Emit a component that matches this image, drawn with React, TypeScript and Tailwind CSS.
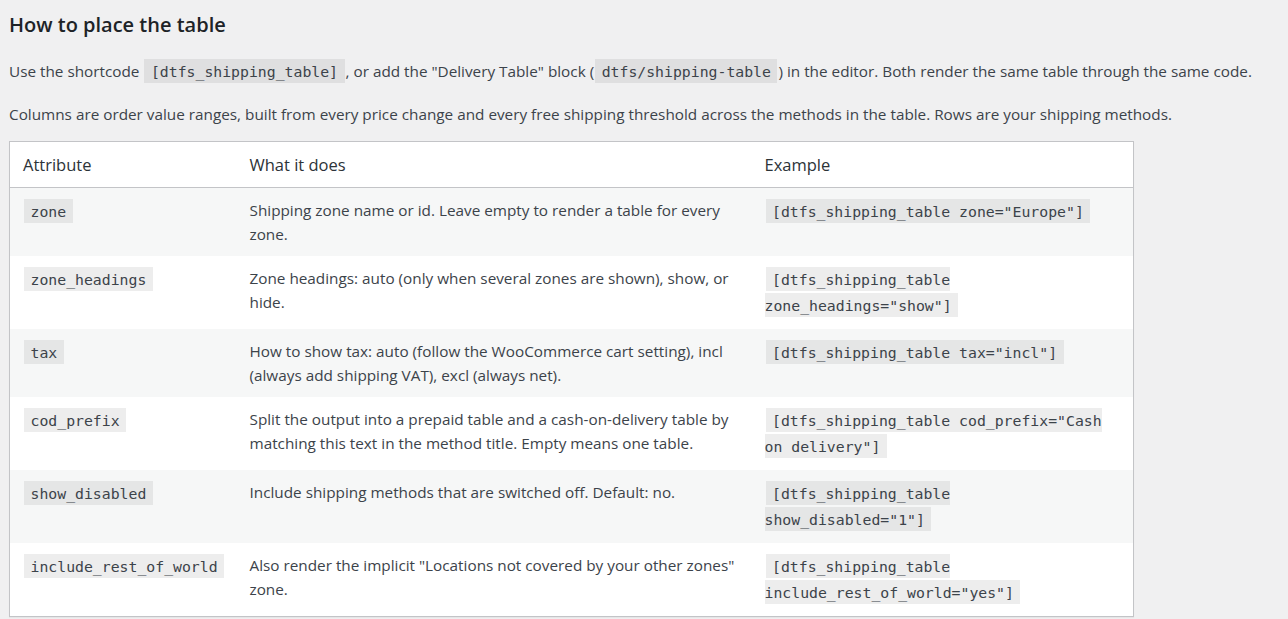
import React from "react";

const sans = { fontFamily: '"Open Sans", "Noto Sans", sans-serif' };
const mono = { fontFamily: '"DejaVu Sans Mono", "Liberation Mono", monospace' };

function Code({ children, tone }: { children: React.ReactNode; tone: "page" | "white" | "stripe" }) {
  const bg = tone === "page" ? "bg-[#dfdfe0]" : tone === "white" ? "bg-[#ededed]" : "bg-[#e5e6e6]";
  return (
    <code className={`${bg} mx-[1px] pt-[4px] pb-[2.5px] px-[6.5px] text-[14.8px] text-[#3c434a]`} style={mono}>
      {children}
    </code>
  );
}

const rows: { attr: string; desc: string; ex: string }[] = [
  { attr: "zone", desc: "Shipping zone name or id. Leave empty to render a table for every zone.", ex: '[dtfs_shipping_table zone="Europe"]' },
  { attr: "zone_headings", desc: "Zone headings: auto (only when several zones are shown), show, or hide.", ex: '[dtfs_shipping_table zone_headings="show"]' },
  { attr: "tax", desc: "How to show tax: auto (follow the WooCommerce cart setting), incl (always add shipping VAT), excl (always net).", ex: '[dtfs_shipping_table tax="incl"]' },
  { attr: "cod_prefix", desc: "Split the output into a prepaid table and a cash-on-delivery table by matching this text in the method title. Empty means one table.", ex: '[dtfs_shipping_table cod_prefix="Cash on delivery"]' },
  { attr: "show_disabled", desc: "Include shipping methods that are switched off. Default: no.", ex: '[dtfs_shipping_table show_disabled="1"]' },
  { attr: "include_rest_of_world", desc: 'Also render the implicit "Locations not covered by your other zones" zone.', ex: '[dtfs_shipping_table include_rest_of_world="yes"]' },
];

export default function App() {
  return (
    <div className="min-h-[619px] w-full bg-[#f0f0f1] pl-[9px] pt-[10px] text-[#3c434a]" style={sans}>
      <h2 className="text-[20px] font-semibold leading-[30px] text-[#1d2327]">How to place the table</h2>
      <p className="mt-[19px] text-[15.3px] leading-[24px]">
        Use the shortcode <Code tone="page">[dtfs_shipping_table]</Code>, or add the "Delivery Table" block (
        <Code tone="page">dtfs/shipping-table</Code>) in the editor. Both render the same table through the same code.
      </p>
      <p className="mt-[18px] text-[15.3px] leading-[24px]">
        Columns are order value ranges, built from every price change and every free shipping threshold across the methods in the table. Rows are your shipping methods.
      </p>
      <table className="mt-[15px] w-[1125px] table-fixed border-collapse border border-[#c3c4c7] bg-white shadow-[0_1px_1px_rgba(0,0,0,0.04)]">
        <colgroup>
          <col className="w-[227px]" />
          <col className="w-[515px]" />
          <col />
        </colgroup>
        <thead>
          <tr className="border-b border-[#c3c4c7]">
            <th className="px-[13px] py-[10px] text-left text-[16.5px] font-normal leading-[25px] text-[#2c3338]">Attribute</th>
            <th className="px-[13px] py-[10px] text-left text-[16.5px] font-normal leading-[25px] text-[#2c3338]">What it does</th>
            <th className="px-[13px] py-[10px] text-left text-[16.5px] font-normal leading-[25px] text-[#2c3338]">Example</th>
          </tr>
        </thead>
        <tbody>
          {rows.map((r, i) => {
            const tone = i % 2 === 0 ? "stripe" : "white";
            return (
              <tr key={r.attr} className={i % 2 === 0 ? "bg-[#f6f7f7]" : "bg-white"}>
                <td className="px-[13px] pt-[12px] pb-[8px] align-top text-[14.8px] leading-[24px]" style={mono}>
                  <Code tone={tone}>{r.attr}</Code>
                </td>
                <td className="px-[13px] py-[10px] align-top text-[15.3px] leading-[24px]">{r.desc}</td>
                <td className="px-[13px] pt-[11px] pb-[10px] align-top text-[14.8px] leading-[26px]" style={mono}>
                  <Code tone={tone}>{r.ex}</Code>
                </td>
              </tr>
            );
          })}
        </tbody>
      </table>
    </div>
  );
}
